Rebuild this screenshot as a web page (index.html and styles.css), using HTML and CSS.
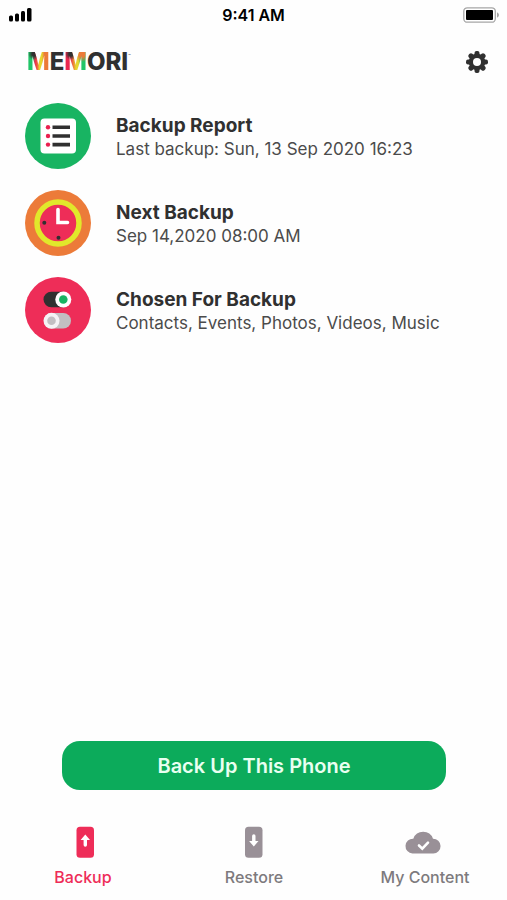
FILE: index.html
```html
<!DOCTYPE html>
<html lang="en">
<head>
<meta charset="utf-8">
<meta name="viewport" content="width=device-width, initial-scale=1">
<title>Memori</title>
<link rel="stylesheet" href="styles.css">
</head>
<body>
<div class="status">
  <svg class="signal" width="24" height="14" viewBox="0 0 24 14" aria-hidden="true"><rect x="1" y="7.500" width="4" height="6" rx="1.500"/><rect x="7" y="5.500" width="4" height="8" rx="1.500"/><rect x="13" y="3" width="4" height="10.500" rx="1.500"/><rect x="19" y="0" width="4.500" height="13.500" rx="1.500"/></svg>
  <time class="clock">9:41 AM</time>
  <svg class="battery" width="37" height="16" viewBox="0 0 37 16" aria-hidden="true"><rect x="1.800" y=".8" width="31.500" height="14.400" rx="3.500" fill="#fff" stroke="#a6a6a6" stroke-width="1.300"/><rect x="4" y="3" width="27" height="10" rx="1"/><path d="M35 5.200q2 1 2 2.800T35 10.800z" fill="#a6a6a6"/></svg>
</div>
<header class="top">
  <h1 class="logo"><span class="m m-one">M</span>E<span class="m m-two">M</span>ORI<span class="mark">™</span></h1>
  <button class="settings" type="button" aria-label="Settings">
    <svg width="22" height="22" viewBox="-11 -11 22 22" aria-hidden="true"><g fill="#303030"><g id="teeth"><rect x="-2.500" y="-11" width="5" height="22" rx="2"/><rect x="-11" y="-2.500" width="22" height="5" rx="2"/></g><use href="#teeth" transform="rotate(45)"/><circle r="8.300"/></g><circle r="4" fill="#fff"/></svg>
  </button>
</header>
<main class="list">
  <a class="row" href="#report">
    <svg class="badge" viewBox="0 0 66 66" aria-hidden="true"><circle cx="33" cy="33" r="33" fill="#18b462"/><rect x="15.500" y="15.500" width="35.500" height="35" rx="4" fill="#fff"/><g fill="#e9204f"><circle cx="23" cy="24.300" r="2.200"/><circle cx="23" cy="33" r="2.200"/><circle cx="23" cy="41.600" r="2.200"/></g><path d="M27.500 24.300h17.500M27.500 33h17.500M27.500 41.600h17.500" stroke="#303030" stroke-width="3.600"/></svg>
    <span class="copy"><strong class="title">Backup Report</strong><span class="sub">Last backup: Sun, 13 Sep 2020 16:23</span></span>
  </a>
  <a class="row" href="#next">
    <svg class="badge" viewBox="0 0 66 66" aria-hidden="true"><circle cx="33" cy="33" r="33" fill="#ec7b39"/><circle cx="33" cy="33" r="21" fill="#ee2d58" stroke="#e1e82b" stroke-width="5.500"/><path d="M33 19.500V32.500H42.500" fill="none" stroke="#fff" stroke-width="3.600" stroke-linecap="round"/><circle cx="19.300" cy="32.800" r="2" fill="#303030"/><circle cx="33.500" cy="47.700" r="2" fill="#303030"/></svg>
    <span class="copy"><strong class="title">Next Backup</strong><span class="sub">Sep 14,2020 08:00 AM</span></span>
  </a>
  <a class="row" href="#chosen">
    <svg class="badge" viewBox="0 0 66 66" aria-hidden="true"><circle cx="33" cy="33" r="33" fill="#ee2d58"/><rect x="18.500" y="14.700" width="27" height="15.500" rx="7.750" fill="#303030"/><circle cx="38.300" cy="22.500" r="8" fill="#fff"/><circle cx="38.300" cy="22.500" r="4.300" fill="#18b462"/><rect x="19" y="36" width="27" height="15.500" rx="7.750" fill="#c2bfc2"/><circle cx="26.500" cy="43.800" r="8" fill="#f5f3f5"/><circle cx="26.500" cy="43.800" r="4.300" fill="#c2bfc2"/></svg>
    <span class="copy"><strong class="title">Chosen For Backup</strong><span class="sub">Contacts, Events, Photos, Videos, Music</span></span>
  </a>
</main>
<button class="primary" type="button">Back Up This Phone</button>
<nav class="tabs" aria-label="Main">
  <a class="tab active" href="#backup" aria-current="page">
    <svg width="36" height="32" viewBox="0 0 36 32" aria-hidden="true"><rect x="11.500" y=".7" width="17.500" height="31" rx="3.500" fill="currentColor"/><path d="M20.300 8.500 25 14H22v5a1.700 1.700 0 0 1-3.400 0v-5h-3z" fill="#fff"/></svg>
    Backup
  </a>
  <a class="tab" href="#restore">
    <svg width="36" height="32" viewBox="0 0 36 32" aria-hidden="true"><rect x="9" y=".7" width="17.500" height="31" rx="3.500" fill="#999097"/><path d="M17.800 20.500 22.500 15H19.500v-5a1.700 1.700 0 0 0-3.400 0v5h-3z" fill="#fff"/></svg>
    Restore
  </a>
  <a class="tab" href="#content">
    <svg width="36" height="32" viewBox="2 0 36 32" overflow="visible" aria-hidden="true"><path d="M7.500 27.500a7.300 7.300 0 0 1 .8-14.800A10.500 10.500 0 0 1 28 12.700a7.400 7.400 0 0 1 .3 14.800z" fill="#999097"/><path d="m14 19.500 3.300 3.200 5.700-6" fill="none" stroke="#fff" stroke-width="2.600" stroke-linecap="round"/></svg>
    My Content
  </a>
</nav>
</body>
</html>
```

FILE: styles.css
```css
* { box-sizing: border-box; }

body {
  margin: 0;
  min-height: 100vh;
  display: flex;
  flex-direction: column;
  background: #fefefe;
  color: #303030;
  font-family: Inter, "Liberation Sans", sans-serif;
}

a { color: inherit; text-decoration: none; }
button { border: 0; padding: 0; font: inherit; cursor: pointer; }
svg { display: block; flex: none; }

.status {
  display: grid;
  grid-template-columns: 1fr auto 1fr;
  align-items: center;
  height: 30px;
  padding: 0 8px;
  color: #000;
}
.clock { font-size: 16px; font-weight: 600; }
.battery { justify-self: end; }

.top {
  display: flex;
  justify-content: space-between;
  align-items: center;
  height: 64px;
  padding: 0 19px 0 27px;
}
.logo {
  display: flex;
  margin: 0;
  font-size: 24px;
  line-height: 28px;
  font-weight: 800;
}
.m {
  color: transparent;
  background-clip: text;
  -webkit-background-clip: text;
}
.m-one {
  background-image:
    radial-gradient(circle at 7px 6px, #303030 2px, transparent 6px),
    linear-gradient(90deg, #21c568 26%, #e9274f 34%, #ec5a40 44%, #e6d72f 54%, #e6d72f 64%, #ec7b39 76%);
}
.m-two {
  background-image:
    radial-gradient(circle at 7px 6px, #303030 2px, transparent 6px),
    radial-gradient(circle at 18px 6px, #ec7b39 3px, transparent 8px),
    linear-gradient(90deg, #e9274f 28%, #ec7b39 40%, #e6d72f 52%, #e6d72f 62%, #21c568 74%);
}
.mark { font-size: 4px; line-height: 16px; font-weight: 400; }
.settings { background: none; }

.list {
  display: flex;
  flex-direction: column;
  gap: 21px;
  padding: 9px 25px;
}
.row { display: flex; align-items: center; gap: 25px; }
.badge { width: 66px; height: 66px; }
.copy { display: flex; flex-direction: column; padding-top: 2px; }
.title { font-size: 19px; line-height: 24px; font-weight: 700; }
.sub { font-size: 17px; line-height: 23px; color: #4b4b4b; }

.primary {
  margin: auto 61px 0 62px;
  height: 49px;
  border-radius: 18px;
  background: #0cab5b;
  color: #e9fff1;
  font-size: 20px;
  font-weight: 600;
}

.tabs {
  display: flex;
  justify-content: space-between;
  padding: 36px 38px 13px 39px;
}
.tab {
  display: flex;
  flex-direction: column;
  align-items: center;
  gap: 9px;
  width: 88px;
  font-size: 16px;
  line-height: 20px;
  font-weight: 500;
  color: #7d7a7d;
  white-space: nowrap;
}
.active { color: #ee2d58; }
```
